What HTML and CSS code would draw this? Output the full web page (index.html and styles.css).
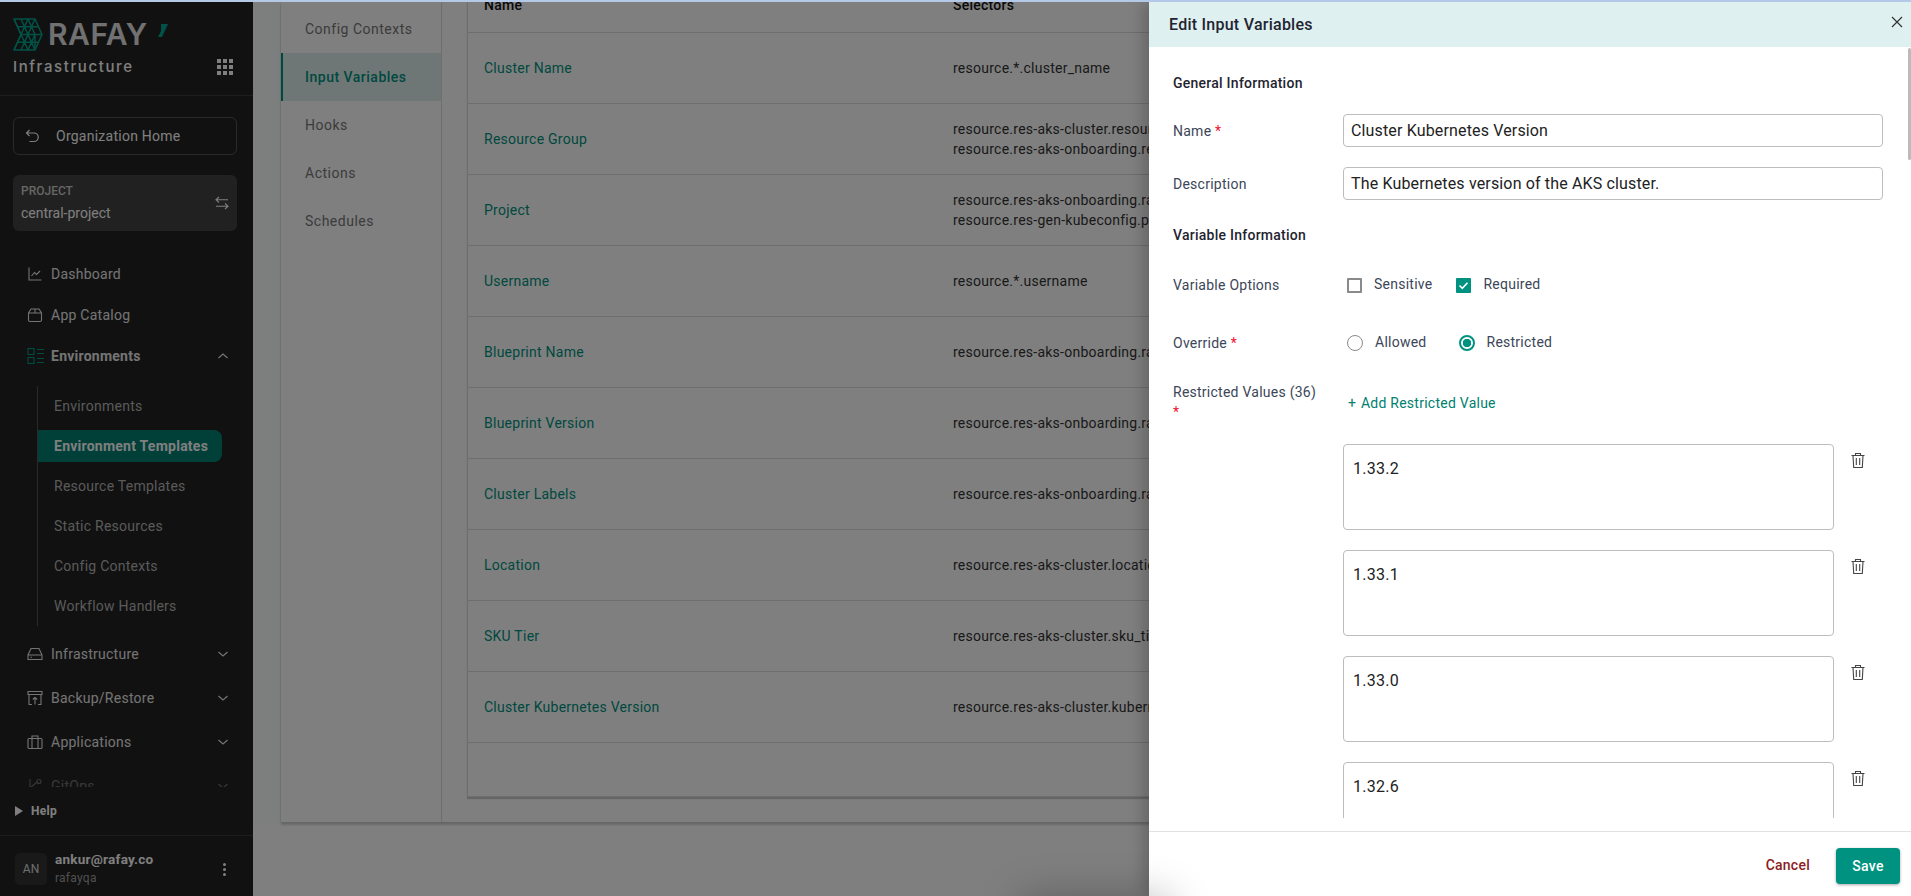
FILE: index.html
```html
<!DOCTYPE html>
<html lang="en">
<head>
    <meta charset="UTF-8">
    <meta name="viewport" content="width=device-width, initial-scale=1.0">
    <title>Edit Input Variables</title>
    <link rel="stylesheet" href="styles.css">
</head>
<body>
    <div class="top-line"></div>
    <div class="app">
        <aside class="sidebar">
            <div class="brand">
                <div class="logo">
                    <svg class="logo-mark" width="30" height="33" viewBox="0 0 30 33" fill="none" stroke="#00a58e" stroke-width="1.5" stroke-linejoin="round">
                        <path d="M1 1H22L29 16.500L22 32H1L8 16.500Z"/>
                        <path d="M1 1L8 16.500L15 1L22 16.500L29 16.500M22 1L15 16.500L8 1M8 16.500H22M8 16.500L15 32L22 16.500L22 32M8 16.500L1 32M22 16.500L15 32M4.500 8.700H25.500M4.500 24.300H25.500M15 16.500L8 32M15 16.500L22 32"/>
                    </svg>
                    <span class="logo-text">RAFAY</span>
                    <svg class="logo-tick" width="11" height="14" viewBox="0 0 11 14"><path d="M4 0H11L5 13H1L4 7Z" fill="#00a58e"/></svg>
                </div>
                <div class="brand-row">
                    <span class="brand-name">Infrastructure</span>
                    <span class="apps-grid"><i></i><i></i><i></i><i></i><i></i><i></i><i></i><i></i><i></i></span>
                </div>
            </div>

            <div class="org-home">
                <svg width="14" height="14" viewBox="0 0 14 14" fill="none" stroke="currentColor" stroke-width="1.200"><path d="M4.500 1L1.500 4L4.500 7M1.500 4H9A3.800 3.800 0 0 1 9 12.500H4.500"/></svg>
                <span>Organization Home</span>
            </div>

            <div class="project-box">
                <div>
                    <div class="project-label">PROJECT</div>
                    <div class="project-name">central-project</div>
                </div>
                <svg width="14" height="14" viewBox="0 0 14 14" fill="none" stroke="currentColor" stroke-width="1.100"><path d="M4 1L1 3.800L4 6.500M1 3.800H13M10 7.500L13 10.200L10 13M13 10.200H1"/></svg>
            </div>

            <nav class="nav">
                <div class="nav-item nav-short">
                    <svg class="nav-icon" width="16" height="16" viewBox="0 0 16 16" fill="none" stroke="currentColor" stroke-width="1.100"><path d="M2 1.500V14H14.500M4.500 10L7.500 6.500L9.500 8.500L13 5"/></svg>
                    <span>Dashboard</span>
                </div>
                <div class="nav-item nav-short">
                    <svg class="nav-icon" width="16" height="16" viewBox="0 0 16 16" fill="none" stroke="currentColor" stroke-width="1.100"><path d="M4 2H12L14.500 6V13A1.500 1.500 0 0 1 13 14.500H3A1.500 1.500 0 0 1 1.500 13V6ZM1.500 6H14.500M8 2V6"/></svg>
                    <span>App Catalog</span>
                </div>
                <div class="nav-item nav-short nav-open">
                    <svg class="nav-icon nav-icon-teal" width="18" height="18" viewBox="0 0 18 18" fill="none" stroke="currentColor" stroke-width="1.100"><rect x="1" y="1.500" width="6" height="6"/><rect x="1" y="10.500" width="6" height="6"/><path d="M10 2.500H17M10 6.500H17M10 11.500H17M10 15.500H17"/></svg>
                    <span>Environments</span>
                    <svg class="chevron" width="12" height="8" viewBox="0 0 12 8" fill="none" stroke="currentColor" stroke-width="1.200"><path d="M1.500 6L6 2L10.500 6"/></svg>
                </div>
                <div class="sub-list">
                    <div class="sub-item">Environments</div>
                    <div class="sub-item sub-active">Environment Templates</div>
                    <div class="sub-item">Resource Templates</div>
                    <div class="sub-item">Static Resources</div>
                    <div class="sub-item">Config Contexts</div>
                    <div class="sub-item">Workflow Handlers</div>
                </div>
                <div class="nav-item nav-first-group">
                    <svg class="nav-icon" width="16" height="16" viewBox="0 0 16 16" fill="none" stroke="currentColor" stroke-width="1.100"><path d="M1 9L4 2.500H12L15 9V13.500H1ZM1 9H15M3.500 11.300H5"/></svg>
                    <span>Infrastructure</span>
                    <svg class="chevron" width="12" height="8" viewBox="0 0 12 8" fill="none" stroke="currentColor" stroke-width="1.200"><path d="M1.500 2L6 6L10.500 2"/></svg>
                </div>
                <div class="nav-item">
                    <svg class="nav-icon" width="16" height="16" viewBox="0 0 16 16" fill="none" stroke="currentColor" stroke-width="1.100"><path d="M1 1.500H15V4.500H1ZM2 4.500V14.500H5M14 4.500V14.500H11M8 14.500V7.500M5.800 9.500L8 7.500L10.200 9.500"/></svg>
                    <span>Backup/Restore</span>
                    <svg class="chevron" width="12" height="8" viewBox="0 0 12 8" fill="none" stroke="currentColor" stroke-width="1.200"><path d="M1.500 2L6 6L10.500 2"/></svg>
                </div>
                <div class="nav-item">
                    <svg class="nav-icon" width="16" height="16" viewBox="0 0 16 16" fill="none" stroke="currentColor" stroke-width="1.100"><rect x="1" y="4.500" width="14" height="10" rx="1"/><path d="M5 14.500V2H11V14.500"/></svg>
                    <span>Applications</span>
                    <svg class="chevron" width="12" height="8" viewBox="0 0 12 8" fill="none" stroke="currentColor" stroke-width="1.200"><path d="M1.500 2L6 6L10.500 2"/></svg>
                </div>
                <div class="nav-item nav-fade">
                    <svg class="nav-icon" width="16" height="16" viewBox="0 0 16 16" fill="none" stroke="currentColor" stroke-width="1.100"><path d="M3 1V15M3 10L10 4"/><circle cx="12" cy="3.500" r="2"/></svg>
                    <span>GitOps</span>
                    <svg class="chevron" width="12" height="8" viewBox="0 0 12 8" fill="none" stroke="currentColor" stroke-width="1.200"><path d="M1.500 2L6 6L10.500 2"/></svg>
                </div>
            </nav>

            <div class="help"><i class="help-arrow"></i>Help</div>

            <div class="user">
                <div class="avatar">AN</div>
                <div class="user-text">
                    <div class="user-mail">ankur@rafay.co</div>
                    <div class="user-org">rafayqa</div>
                </div>
                <span class="user-dots"><i></i><i></i><i></i></span>
            </div>
        </aside>

        <main class="main">
            <div class="panel">
                <div class="tabs">
                    <div class="tab">Config Contexts</div>
                    <div class="tab tab-active">Input Variables</div>
                    <div class="tab">Hooks</div>
                    <div class="tab">Actions</div>
                    <div class="tab">Schedules</div>
                </div>
                <div class="table-wrap">
                    <div class="table">
                        <div class="table-head">
                            <div class="col-name">Name</div>
                            <div class="col-sel">Selectors</div>
                        </div>
                        <div class="table-row"><div class="col-name link">Cluster Name</div><div class="col-sel">resource.*.cluster_name</div></div>
                        <div class="table-row"><div class="col-name link">Resource Group</div><div class="col-sel">resource.res-aks-cluster.resource_group<br>resource.res-aks-onboarding.resource_group</div></div>
                        <div class="table-row"><div class="col-name link">Project</div><div class="col-sel">resource.res-aks-onboarding.rafay_project<br>resource.res-gen-kubeconfig.project</div></div>
                        <div class="table-row"><div class="col-name link">Username</div><div class="col-sel">resource.*.username</div></div>
                        <div class="table-row"><div class="col-name link">Blueprint Name</div><div class="col-sel">resource.res-aks-onboarding.rafay_blueprint</div></div>
                        <div class="table-row"><div class="col-name link">Blueprint Version</div><div class="col-sel">resource.res-aks-onboarding.rafay_version</div></div>
                        <div class="table-row"><div class="col-name link">Cluster Labels</div><div class="col-sel">resource.res-aks-onboarding.rafay_labels</div></div>
                        <div class="table-row"><div class="col-name link">Location</div><div class="col-sel">resource.res-aks-cluster.location</div></div>
                        <div class="table-row"><div class="col-name link">SKU Tier</div><div class="col-sel">resource.res-aks-cluster.sku_tier</div></div>
                        <div class="table-row"><div class="col-name link">Cluster Kubernetes Version</div><div class="col-sel">resource.res-aks-cluster.kubernetes_version</div></div>
                        <div class="table-foot"></div>
                    </div>
                </div>
            </div>
        </main>

        <div class="scrim"></div>

        <section class="drawer">
            <div class="drawer-head">
                <span>Edit Input Variables</span>
                <svg class="close" width="12" height="12" viewBox="0 0 12 12" fill="none" stroke="#333" stroke-width="1.200"><path d="M1 1L11 11M11 1L1 11"/></svg>
            </div>
            <div class="drawer-body">
                <h4 class="section first">General Information</h4>
                <div class="form-row name-row">
                    <label class="label">Name <em>*</em></label>
                    <div class="field">Cluster Kubernetes Version</div>
                </div>
                <div class="form-row desc-row">
                    <label class="label">Description</label>
                    <div class="field">The Kubernetes version of the AKS cluster.</div>
                </div>
                <h4 class="section">Variable Information</h4>
                <div class="form-row options-row">
                    <label class="label">Variable Options</label>
                    <div class="choices">
                        <span class="check"></span><span class="choice-text sensitive">Sensitive</span>
                        <span class="check checked">
                            <svg width="15" height="15" viewBox="0 0 15 15" fill="none" stroke="#fff" stroke-width="1.600"><path d="M3.500 7.500L6.300 10.300L11.500 4.700"/></svg>
                        </span><span class="choice-text">Required</span>
                    </div>
                </div>
                <div class="form-row override-row">
                    <label class="label">Override <em>*</em></label>
                    <div class="choices">
                        <span class="radio"></span><span class="choice-text allowed">Allowed</span>
                        <span class="radio picked"></span><span class="choice-text">Restricted</span>
                    </div>
                </div>
                <div class="form-row restricted-row">
                    <label class="label">Restricted Values (36)<br><em>*</em></label>
                    <div class="add-value"><span class="plus">+</span> Add Restricted Value</div>
                </div>
                <div class="value-row">
                    <div class="value-box">1.33.2</div>
                    <svg class="trash" width="16" height="17" viewBox="0 0 16 17" fill="none" stroke="#444" stroke-width="1.100"><path d="M1.500 3.500H14.500M5.500 3.500V1.500H10.500V3.500M3 3.500L3.700 15.500H12.300L13 3.500M6.300 6V13M9.700 6V13"/></svg>
                </div>
                <div class="value-row">
                    <div class="value-box">1.33.1</div>
                    <svg class="trash" width="16" height="17" viewBox="0 0 16 17" fill="none" stroke="#444" stroke-width="1.100"><path d="M1.500 3.500H14.500M5.500 3.500V1.500H10.500V3.500M3 3.500L3.700 15.500H12.300L13 3.500M6.300 6V13M9.700 6V13"/></svg>
                </div>
                <div class="value-row">
                    <div class="value-box">1.33.0</div>
                    <svg class="trash" width="16" height="17" viewBox="0 0 16 17" fill="none" stroke="#444" stroke-width="1.100"><path d="M1.500 3.500H14.500M5.500 3.500V1.500H10.500V3.500M3 3.500L3.700 15.500H12.300L13 3.500M6.300 6V13M9.700 6V13"/></svg>
                </div>
                <div class="value-row">
                    <div class="value-box">1.32.6</div>
                    <svg class="trash" width="16" height="17" viewBox="0 0 16 17" fill="none" stroke="#444" stroke-width="1.100"><path d="M1.500 3.500H14.500M5.500 3.500V1.500H10.500V3.500M3 3.500L3.700 15.500H12.300L13 3.500M6.300 6V13M9.700 6V13"/></svg>
                </div>
            </div>
            <div class="scroll-thumb"></div>
            <div class="drawer-foot">
                <span class="cancel">Cancel</span>
                <span class="save">Save</span>
            </div>
        </section>

        <div class="toast-shadow"></div>
    </div>
</body>
</html>
```

FILE: styles.css
```css
* {
    box-sizing: border-box;
}

body {
    margin: 0;
    height: 100vh;
    overflow: hidden;
    display: flex;
    flex-direction: column;
    font-family: Roboto, "Liberation Sans", sans-serif;
    font-size: 14px;
    letter-spacing: 0.25px;
    color: #333;
    background: #fff;
}

.top-line {
    height: 2px;
    flex-shrink: 0;
    background: #b4c8e8;
}

.app {
    position: relative;
    flex: 1;
    min-height: 0;
    display: flex;
    overflow: hidden;
}

/* sidebar */
.sidebar {
    width: 253px;
    flex-shrink: 0;
    display: flex;
    flex-direction: column;
    background: #222;
    color: #fff;
}

.brand {
    height: 94px;
    flex-shrink: 0;
    padding: 16px 20px 0 13px;
    border-bottom: 1px solid #3c3c3c;
}

.logo {
    position: relative;
    display: flex;
    align-items: center;
    height: 33px;
}

.logo-text {
    margin-left: 5px;
    font-family: Inter, sans-serif;
    font-size: 30px;
    font-weight: 600;
    letter-spacing: 0.5px;
    line-height: 33px;
    color: #e2e2e2;
}

.logo-tick {
    position: absolute;
    left: 144px;
    top: 6px;
}

.brand-row {
    display: flex;
    align-items: center;
    justify-content: space-between;
    margin-top: 6px;
}

.brand-name {
    font-family: Inter, sans-serif;
    font-size: 15px;
    font-weight: 500;
    letter-spacing: 1.600px;
    color: #fff;
}

.apps-grid {
    display: grid;
    grid-template-columns: repeat(3, 4px);
    gap: 2px;
}

.apps-grid i {
    width: 4px;
    height: 4px;
    background: #fff;
}

.org-home {
    display: flex;
    align-items: center;
    gap: 17px;
    height: 38px;
    margin: 21px 16px 0 13px;
    padding-left: 11px;
    border: 1px solid #555;
    border-radius: 6px;
}

.project-box {
    display: flex;
    align-items: center;
    justify-content: space-between;
    height: 56px;
    margin: 20px 16px 0 13px;
    padding: 0 8px;
    border-radius: 6px;
    background: #424242;
}

.project-label {
    font-size: 12px;
    font-weight: 500;
    line-height: 17px;
    letter-spacing: 0;
    color: #ccc;
}

.project-name {
    margin-top: 3px;
    line-height: 20px;
    letter-spacing: 0;
}

.nav {
    flex: 1;
    min-height: 0;
    overflow: hidden;
    margin-top: 22px;
}

.nav-item {
    position: relative;
    display: flex;
    align-items: center;
    height: 44px;
    padding-left: 27px;
    color: #fff;
    opacity: 0.9;
}

.nav-short {
    height: 41px;
}

.nav-open {
    font-weight: 700;
}

.nav-first-group {
    margin-top: 6px;
}

.nav-icon {
    flex-shrink: 0;
    width: 16px;
    margin-right: 8px;
}

.nav-icon-teal {
    width: 18px;
    margin-right: 6px;
    color: #00a58e;
}

.chevron {
    position: absolute;
    left: 217px;
    top: 50%;
    margin-top: -4px;
}

.sub-list {
    margin: 10px 0 0 37px;
    border-left: 1px solid #555;
}

.sub-item {
    display: flex;
    align-items: center;
    height: 40px;
    padding-left: 16px;
    color: #b4b4b4;
}

.sub-active {
    height: 32px;
    margin: 4px 0;
    width: 184px;
    border-radius: 0 8px 8px 0;
    background: #008072;
    color: #fff;
    font-weight: 700;
}

.nav-fade {
    opacity: 0.35;
}

.help {
    display: flex;
    align-items: center;
    height: 49px;
    flex-shrink: 0;
    padding-left: 15px;
    font-size: 12px;
    font-weight: 700;
    border-bottom: 1px solid #3c3c3c;
}

.help-arrow {
    width: 0;
    height: 0;
    margin-right: 8px;
    border-style: solid;
    border-width: 5px 0 5px 8px;
    border-color: transparent transparent transparent #fff;
}

.user {
    height: 60px;
    flex-shrink: 0;
    display: flex;
    align-items: flex-start;
    padding: 17px 0 0 15px;
    position: relative;
}

.avatar {
    width: 32px;
    height: 32px;
    display: flex;
    align-items: center;
    justify-content: center;
    border-radius: 5px;
    background: #333;
    color: #ddd;
    font-size: 12px;
    letter-spacing: 0;
}

.user-text {
    margin-left: 8px;
    margin-top: -3px;
}

.user-mail {
    font-weight: 700;
    line-height: 18px;
    font-size: 13.500px;
}

.user-org {
    margin-top: 2px;
    font-size: 12px;
    line-height: 16px;
    color: #a0a0a0;
}

.user-dots {
    position: absolute;
    left: 223px;
    top: 27px;
    display: flex;
    flex-direction: column;
    gap: 2px;
}

.user-dots i {
    width: 3px;
    height: 3px;
    border-radius: 50%;
    background: #fff;
}

/* page behind the drawer */
.main {
    flex: 1;
    min-width: 0;
    padding: 0 10px 0 28px;
    background: linear-gradient(#fafffe 0, #fafffe 822px, #fff 822px);
}

.panel {
    display: flex;
    height: 820px;
    background: #fff;
    box-shadow: 0 3px 2px rgba(0, 0, 0, 0.18), -1px 0 1px rgba(0, 0, 0, 0.06);
}

.tabs {
    width: 161px;
    flex-shrink: 0;
    padding-top: 3px;
    border-right: 1px solid #ddd;
}

.tab {
    display: flex;
    align-items: center;
    height: 48px;
    padding-left: 24px;
    color: #8a8a8a;
    letter-spacing: 0.5px;
    color: #777;
}

.tab-active {
    border-left: 2px solid #009280;
    padding-left: 22px;
    background: #deeeed;
    color: #009280;
    font-weight: 500;
}

.table-wrap {
    flex: 1;
    min-width: 0;
    padding-left: 25px;
    overflow: hidden;
}

.table {
    margin-top: -25px;
    border: 1px solid #ddd;
    border-top: 0;
    box-shadow: 0 2px 1px rgba(0, 0, 0, 0.2);
    margin-bottom: 4px;
}

.table-head {
    display: flex;
    align-items: center;
    height: 56px;
    font-weight: 500;
    color: #111;
    border-bottom: 1px solid #ddd;
}

.table-row {
    display: flex;
    align-items: center;
    height: 71px;
    line-height: 20px;
    border-bottom: 1px solid #ddd;
}

.table-foot {
    height: 53px;
}

.col-name {
    width: 485px;
    padding-left: 16px;
    flex-shrink: 0;
}

.col-sel {
    white-space: nowrap;
}

.link {
    color: #009280;
}

.scrim {
    position: absolute;
    inset: 0;
    background: rgba(0, 0, 0, 0.5);
}

/* drawer */
.drawer {
    position: absolute;
    top: 0;
    right: 0;
    bottom: 0;
    width: 762px;
    display: flex;
    flex-direction: column;
    background: #fff;
    box-shadow: -6px 0 14px rgba(0, 0, 0, 0.2);
}

.drawer-head {
    position: relative;
    height: 45px;
    flex-shrink: 0;
    display: flex;
    align-items: center;
    padding-left: 20px;
    background: #dff0f0;
    color: #1f2430;
    font-size: 16px;
    font-weight: 500;
}

.close {
    position: absolute;
    right: 8px;
    top: 14px;
}

.drawer-body {
    flex: 1;
    min-height: 0;
    overflow: hidden;
    margin-bottom: 13px;
    padding: 26px 0 0 24px;
}

.section {
    margin: 25px 0 0;
    font-size: 14px;
    font-weight: 500;
    line-height: 20px;
    color: #1f2430;
}

.section.first {
    margin-top: 0;
}

.form-row {
    display: flex;
    align-items: center;
}

.name-row {
    margin-top: 21px;
}

.desc-row {
    margin-top: 20px;
}

.options-row {
    margin-top: 30px;
}

.override-row {
    margin-top: 38px;
}

.restricted-row {
    margin-top: 29px;
    align-items: flex-start;
}

.label {
    width: 170px;
    flex-shrink: 0;
    line-height: 20px;
    color: #3c4658;
}

.label em {
    font-style: normal;
    color: #f01030;
}

.field {
    width: 540px;
    height: 33px;
    display: flex;
    align-items: center;
    padding-left: 7px;
    border: 1px solid #bdbdbd;
    border-radius: 4px;
    font-size: 16px;
    letter-spacing: 0.15px;
    color: #222;
}

.choices {
    display: flex;
    align-items: center;
    height: 20px;
    padding-left: 4px;
}

.check {
    width: 15px;
    height: 15px;
    display: block;
    border: 2px solid #8a8a8a;
    border-radius: 1px;
}

.check.checked {
    margin-left: 24px;
    border: 0;
    background: #009280;
}

.check svg {
    display: block;
}

.choice-text {
    margin-left: 12px;
    line-height: 20px;
    color: #3c4658;
    margin-top: -2px;
}

.radio {
    width: 16px;
    height: 16px;
    display: block;
    border: 1.500px solid #8a8a8a;
    border-radius: 50%;
}

.radio.picked {
    margin-left: 32px;
    border: 2px solid #009280;
    background: radial-gradient(circle, #009280 0 4px, #fff 4.500px);
}

.add-value {
    margin-top: 11px;
    margin-left: 5px;
    line-height: 20px;
    color: #00806f;
    font-weight: 500;
    font-weight: 400;
}

.plus {
    margin-right: 1px;
}

.value-row {
    display: flex;
    align-items: flex-start;
    margin: 20px 0 0 170px;
}

.restricted-row + .value-row {
    margin-top: 22px;
}

.value-box {
    width: 491px;
    height: 86px;
    flex-shrink: 0;
    padding: 12px 9px;
    border: 1px solid #bdbdbd;
    border-radius: 4px;
    font-size: 16px;
    line-height: 24px;
    color: #222;
}

.trash {
    margin: 8px 0 0 16px;
}

.scroll-thumb {
    position: absolute;
    right: 0;
    top: 46px;
    width: 3px;
    height: 112px;
    border-radius: 2px;
    background: #bbb;
}

.drawer-foot {
    height: 65px;
    flex-shrink: 0;
    display: flex;
    align-items: flex-start;
    justify-content: flex-end;
    padding: 16px 11px 0 0;
    border-top: 1px solid #e2e2e2;
    font-weight: 500;
}

.cancel {
    margin: 9px 26px 0 0;
    color: #8c1c22;
}

.save {
    width: 64px;
    height: 36px;
    display: flex;
    align-items: center;
    justify-content: center;
    border-radius: 4px;
    background: #009280;
    color: #fff;
    box-shadow: 0 1px 3px rgba(0, 0, 0, 0.35);
}

/* dark smear at the bottom edge, from a toast leaving the screen */
.toast-shadow {
    position: absolute;
    left: 1030px;
    bottom: -40px;
    width: 130px;
    height: 30px;
    box-shadow: 0 0 40px 10px rgba(0, 0, 0, 0.25);
}
```
